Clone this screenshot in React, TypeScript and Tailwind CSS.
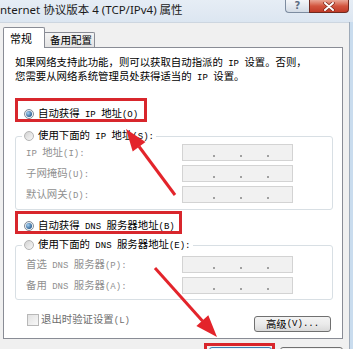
import React from "react";

const M = ({ children }: { children: React.ReactNode }) => (
  <span className="font-['Liberation_Mono',monospace] text-[9px]">{children}</span>
);

function Radio({ checked }: { checked?: boolean }) {
  return checked ? (
    <span className="flex w-[10px] h-[10px] shrink-0 items-center justify-center rounded-full border border-[#7f8a96] bg-gradient-to-br from-[#dfe4ea] to-[#ffffff]">
      <span className="w-[6px] h-[6px] rounded-full bg-[radial-gradient(circle_at_35%_35%,#a6d2f4,#2a5c8f_75%)]" />
    </span>
  ) : (
    <span className="flex w-[10px] h-[10px] shrink-0 rounded-full border border-[#b4b4b4] bg-gradient-to-br from-[#d2d2d2] to-[#f8f8f8]" />
  );
}

function IPBox() {
  return (
    <div className="flex items-end w-[111px] h-[17px] border border-[#d3d3d3] bg-[#f1f1f1] pl-[30px] pb-[3px] gap-[25px]">
      <span className="w-[2px] h-[2px] bg-[#a0a0a0]" />
      <span className="w-[2px] h-[2px] bg-[#a0a0a0]" />
      <span className="w-[2px] h-[2px] bg-[#a0a0a0]" />
    </div>
  );
}

function Row({ children }: { children: React.ReactNode }) {
  return (
    <div className="flex items-center h-[17px]">
      <span className="w-[166px] pl-[10px] text-[#8f8f8f] whitespace-nowrap">{children}</span>
      <IPBox />
    </div>
  );
}

export default function App() {
  return (
    <div className="relative w-[353px] h-[349px] overflow-hidden bg-[#f0f0f0] font-['Noto_Sans_CJK_SC',sans-serif] text-[10.4px] leading-[12px] text-black">
      {/* title bar */}
      <div className="flex h-[22px] bg-gradient-to-b from-[#e6edf5] to-[#dce6f1]">
        <span className="pt-[3px] leading-[14px] text-[11.5px] font-['Noto_Sans','Noto_Sans_CJK_SC',sans-serif] whitespace-nowrap text-[#1a1a1a]">
          nternet 协议版本 4 (TCP/IPv4) 属性
        </span>
        <div className="ml-auto mr-[4px] flex h-[13px]">
          <div className="flex w-[24px] h-[13px] items-center justify-center border border-t-0 border-r-0 border-[#7d8ca0] rounded-bl-[4px] bg-gradient-to-b from-[#f4f6f9] to-[#d3dbe5]">
            <span className="text-[10px] leading-[10px] font-bold text-[#5d6e84] font-['DejaVu_Sans',sans-serif]">?</span>
          </div>
          <div className="flex w-[40px] h-[13px] items-center justify-center border border-t-0 border-[#6f2a20] rounded-br-[4px] bg-gradient-to-b from-[#e9a797] via-[#d2553f] to-[#c13a27]">
            <svg width="12" height="9" viewBox="0 0 12 9">
              <path d="M2 1 L10 8 M10 1 L2 8" stroke="#7a2418" strokeWidth="3.4" strokeLinecap="round" />
              <path d="M2 1 L10 8 M10 1 L2 8" stroke="#ffffff" strokeWidth="2" strokeLinecap="round" />
            </svg>
          </div>
        </div>
      </div>

      {/* body */}
      <div className="flex h-[327px]">
        <div className="w-[349px] border-t border-[#cdd6e0] pl-[3px] pt-[4px]">
          {/* tabs */}
          <div className="flex items-end h-[20px]">
            <div className="relative z-10 w-[42px] h-[21px] -mb-[1px] border border-b-0 border-[#898c95] rounded-t-[2px] bg-white pl-[6px] pt-[3px] text-[11px] leading-[14px] whitespace-nowrap">
              常规
            </div>
            <div className="w-[50px] h-[15px] border border-l-0 border-b-0 border-[#898c95] rounded-tr-[2px] bg-gradient-to-b from-[#f4f4f4] to-[#e3e3e3] pl-[5px] text-[10.5px] leading-[14px] whitespace-nowrap">
              备用配置
            </div>
          </div>
          {/* panel */}
          <div className="flex flex-col w-[340px] h-[292px] border border-[#898c95] bg-white">
            <p className="ml-[11px] mt-[8px] whitespace-nowrap">
              如果网络支持此功能，则可以获取自动指派的<M> IP </M>设置。否则，
              <br />
              您需要从网络系统管理员处获得适当的<M> IP </M>设置。
            </p>
            <div className="ml-[20px] mt-[23px] flex h-[14px] items-center gap-[4px] whitespace-nowrap">
              <Radio checked />
              <span>
                自动获得<M> IP </M>地址<M>(O)</M>
              </span>
            </div>
            <fieldset className="ml-[11px] mt-[8px] w-[318px] border border-[#d8dfe4] rounded-[3px] pb-[6px]">
              <legend className="ml-[6px] px-[2px]">
                <span className="flex h-[14px] items-center gap-[4px] whitespace-nowrap">
                  <Radio />
                  <span>
                    使用下面的<M> IP </M>地址<M>(S):</M>
                  </span>
                </span>
              </legend>
              <div className="flex flex-col gap-[4px] pt-[1px]">
                <Row>
                  <M>IP </M>地址<M>(I):</M>
                </Row>
                <Row>
                  子网掩码<M>(U):</M>
                </Row>
                <Row>
                  默认网关<M>(D):</M>
                </Row>
              </div>
            </fieldset>
            <div className="ml-[20px] mt-[9px] flex h-[14px] items-center gap-[4px] whitespace-nowrap">
              <Radio checked />
              <span>
                自动获得<M> DNS </M>服务器地址<M>(B)</M>
              </span>
            </div>
            <fieldset className="ml-[11px] mt-[5px] w-[318px] border border-[#d8dfe4] rounded-[3px] pb-[5px]">
              <legend className="ml-[6px] px-[2px]">
                <span className="flex h-[14px] items-center gap-[4px] whitespace-nowrap">
                  <Radio />
                  <span>
                    使用下面的<M> DNS </M>服务器地址<M>(E):</M>
                  </span>
                </span>
              </legend>
              <div className="flex flex-col gap-[4px] pt-[4px]">
                <Row>
                  首选<M> DNS </M>服务器<M>(P):</M>
                </Row>
                <Row>
                  备用<M> DNS </M>服务器<M>(A):</M>
                </Row>
              </div>
            </fieldset>
            <div className="mt-[14px] flex items-start">
              <div className="ml-[23px] flex h-[12px] items-center gap-[2px] whitespace-nowrap">
                <span className="w-[12px] h-[12px] border border-[#b8b8b8] bg-gradient-to-br from-[#e2e2e2] to-[#f8f8f8]" />
                <span className="text-[#6d6d6d]">
                  退出时验证设置<M>(L)</M>
                </span>
              </div>
              <div className="ml-auto mr-[11px] mt-[2px] flex w-[77px] h-[16px] items-center justify-center rounded-[3px] border border-[#707070] bg-gradient-to-b from-[#f3f3f3] via-[#ebebeb] to-[#d9d9d9] whitespace-nowrap">
                高级<M>(V)...</M>
              </div>
            </div>
          </div>
          {/* bottom buttons */}
          <div className="mt-[8px] flex justify-end gap-[8px] pr-[6px]">
            <div className="w-[63px] h-[20px] rounded-[3px] border border-[#3c7fb1] bg-gradient-to-b from-[#eaf6fd] to-[#bee6fd]" />
            <div className="w-[63px] h-[20px] rounded-[3px] border border-[#707070] bg-gradient-to-b from-[#f2f2f2] to-[#dddddd]" />
          </div>
        </div>
        <div className="w-[4px] border-l border-[#9eaab8] bg-[#c9dcee]" />
      </div>

      {/* annotations */}
      <div className="absolute left-[15px] top-[98px] w-[132px] h-[24px] border-[3px] border-[#d8262c]" />
      <div className="absolute left-[15px] top-[211px] w-[167px] h-[23px] border-[3px] border-[#d8262c]" />
      <div className="absolute left-[204px] top-[343px] w-[71px] h-[14px] border-[3px] border-[#d8262c]" />
      <svg className="absolute left-0 top-0" width="353" height="349" viewBox="0 0 353 349">
        <line x1="175" y1="195" x2="139" y2="146.5" stroke="#e3242b" strokeWidth="3" />
        <polygon points="126,129 145.5,141.9 132.7,151.5" fill="#e3242b" />
        <line x1="155" y1="268" x2="202.5" y2="321" stroke="#e3242b" strokeWidth="3" />
        <polygon points="217,337 208.3,315.3 196.4,325.9" fill="#e3242b" />
      </svg>
    </div>
  );
}
